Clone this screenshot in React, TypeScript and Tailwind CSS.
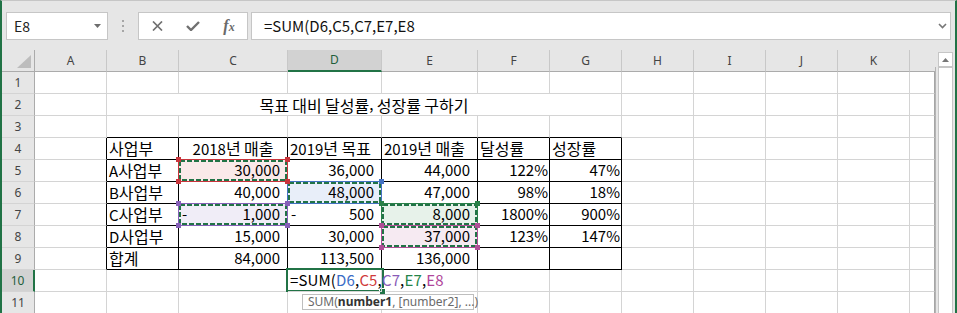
import React from "react";

type Kind = "l" | "c" | "n" | "p" | "d";
type Cell = { t: string; k: Kind; bg?: string };

const CELL_FONT = "font-['Noto_Sans_CJK_KR','Noto_Sans',sans-serif]";
const UI_FONT = "font-['Noto_Sans','Noto_Sans_CJK_KR',sans-serif]";

const COLS = ["", "A", "B", "C", "D", "E", "F", "G", "H", "I", "J", "K", ""];

const ALIGN: Record<Kind, string> = {
  l: "justify-start pl-[2px]",
  c: "justify-center",
  n: "justify-end pr-[7px]",
  p: "justify-end pr-[1px]",
  d: "justify-between pl-[3px] pr-[7px]",
};

// sheet contents, keyed by row then column index (1 = A)
const DATA: Record<number, Record<number, Cell>> = {
  4: {
    2: { t: "사업부", k: "l" },
    3: { t: "2018년 매출", k: "c" },
    4: { t: "2019년 목표", k: "l" },
    5: { t: "2019년 매출", k: "l" },
    6: { t: "달성률", k: "l" },
    7: { t: "성장률", k: "l" },
  },
  5: {
    2: { t: "A사업부", k: "l" },
    3: { t: "30,000", k: "n", bg: "bg-[#fae9e9]" },
    4: { t: "36,000", k: "n" },
    5: { t: "44,000", k: "n" },
    6: { t: "122%", k: "p" },
    7: { t: "47%", k: "p" },
  },
  6: {
    2: { t: "B사업부", k: "l" },
    3: { t: "40,000", k: "n" },
    4: { t: "48,000", k: "n", bg: "bg-[#e8eef9]" },
    5: { t: "47,000", k: "n" },
    6: { t: "98%", k: "p" },
    7: { t: "18%", k: "p" },
  },
  7: {
    2: { t: "C사업부", k: "l" },
    3: { t: "1,000", k: "d", bg: "bg-[#f0edf7]" },
    4: { t: "500", k: "d" },
    5: { t: "8,000", k: "n", bg: "bg-[#e7f2ea]" },
    6: { t: "1800%", k: "p" },
    7: { t: "900%", k: "p" },
  },
  8: {
    2: { t: "D사업부", k: "l" },
    3: { t: "15,000", k: "n" },
    4: { t: "30,000", k: "n" },
    5: { t: "37,000", k: "n", bg: "bg-[#f6eaf2]" },
    6: { t: "123%", k: "p" },
    7: { t: "147%", k: "p" },
  },
  9: {
    2: { t: "합계", k: "l" },
    3: { t: "84,000", k: "n" },
    4: { t: "113,500", k: "n" },
    5: { t: "136,000", k: "n" },
  },
};

// hangul runs are set a touch larger, like Malgun Gothic next to its digits
function Ko({ s }: { s: string }) {
  const parts = s.split(/([\uac00-\ud7a3]+)/);
  return (
    <>
      {parts.map((p, i) =>
        /[\uac00-\ud7a3]/.test(p) ? (
          <span key={i} className="text-[16px]">
            {p}
          </span>
        ) : (
          <span key={i} className="whitespace-pre">
            {p}
          </span>
        )
      )}
    </>
  );
}

function borders(r: number, c: number) {
  const rBlack = r >= 4 && r <= 9 && c >= 1 && c <= 7;
  const bBlack = r >= 3 && r <= 9 && c >= 2 && c <= 7;
  const right = c === 12 ? "border-r-[#a6a6a6]" : rBlack ? "border-r-black" : "border-r-[#d4d4d4]";
  const bottom = bBlack ? "border-b-black" : "border-b-[#d4d4d4]";
  return `border-r border-b ${right} ${bottom}`;
}

function RefBox({
  pos,
  line,
  dot,
  w,
  h,
}: {
  pos: string;
  line: string;
  dot: string;
  w: number;
  h: number;
}) {
  return (
    <div className={`absolute ${pos}`}>
      <div className={`absolute inset-0 border ${line}`} />
      <svg className="absolute left-[1px] top-[1px]" width={w - 2} height={h - 2}>
        <rect
          x={1}
          y={1}
          width={w - 4}
          height={h - 4}
          fill="none"
          stroke="#217346"
          strokeWidth={2}
          strokeDasharray="5 2"
        />
      </svg>
      <span className={`absolute left-[-2px] top-[-2px] size-[5px] ${dot}`} />
      <span className={`absolute right-[-2px] top-[-2px] size-[5px] ${dot}`} />
      <span className={`absolute left-[-2px] bottom-[-2px] size-[5px] ${dot}`} />
      <span className={`absolute right-[-2px] bottom-[-2px] size-[5px] ${dot}`} />
    </div>
  );
}

function FormulaBar() {
  return (
    <div className="h-[49px] flex items-start pt-[11px] pl-[4px] pr-[4px]">
      {/* Name box */}
      <div className="w-[102px] h-[28px] bg-white border border-[#c6c6c6] flex items-center justify-between pl-[7px] pr-[6px]">
        <span className={`text-[14px] text-[#222] ${CELL_FONT}`}>E8</span>
        <svg width="7" height="4">
          <path d="M0 0H7L3.5 4Z" fill="#6d6d6d" />
        </svg>
      </div>
      <div className="w-[30px] h-[28px] flex flex-col items-center justify-center gap-[3px]">
        <span className="size-[2px] bg-[#a6a6a6]" />
        <span className="size-[2px] bg-[#a6a6a6]" />
        <span className="size-[2px] bg-[#a6a6a6]" />
      </div>
      {/* Cancel / Enter / fx */}
      <div className="w-[110px] h-[28px] bg-white border border-[#c6c6c6] flex items-center">
        <div className="w-[36px] flex justify-center">
          <svg width="11" height="10">
            <path d="M1 0.5L10 9.5M10 0.5L1 9.5" stroke="#707070" strokeWidth="1.7" />
          </svg>
        </div>
        <div className="w-[36px] flex justify-center">
          <svg width="14" height="10">
            <path d="M1 5L5 9L13 1" stroke="#707070" strokeWidth="2.4" fill="none" />
          </svg>
        </div>
        <div className="w-[36px] flex justify-center">
          <span className="font-['Liberation_Serif',serif] italic font-bold text-[#6a6a6a] text-[16px] leading-none">
            f<span className="text-[12px]">x</span>
          </span>
        </div>
      </div>
      {/* Formula input */}
      <div className="flex-1 ml-[3px] h-[28px] bg-white border border-[#c6c6c6] flex items-center justify-between pl-[12px] pr-[3px]">
        <span className={`text-[15px] text-[#111] ${CELL_FONT}`}>=SUM(D6,C5,C7,E7,E8</span>
        <svg width="9" height="6">
          <path d="M1 1L4.5 4.5L8 1" stroke="#777" strokeWidth="1.6" fill="none" />
        </svg>
      </div>
    </div>
  );
}

function Sheet() {
  const cells: React.ReactNode[] = [];

  // column headers
  COLS.forEach((label, c) => {
    if (c === 0) {
      cells.push(
        <div key="corner" className="relative bg-[#e6e6e6] border-r border-b border-r-[#ababab] border-b-[#ababab]">
          <svg className="absolute left-[13px] top-[5px]" width="17" height="14">
            <path d="M16 0V13H2Z" fill="#bdbdbd" />
          </svg>
        </div>
      );
      return;
    }
    const sel = c === 4;
    cells.push(
      <div
        key={`h${c}`}
        className={`flex items-center justify-center text-[12px] ${UI_FONT} ${
          sel
            ? "bg-[#d2d2d2] border-b-2 border-b-[#217346] text-[#1e5e3b]"
            : "bg-[#e6e6e6] border-b border-b-[#ababab] text-[#444]"
        } ${c === 12 ? "" : "border-r border-r-[#c8c8c8]"}`}
      >
        {label}
      </div>
    );
  });

  for (let r = 1; r <= 11; r++) {
    const sel = r === 10;
    cells.push(
      <div
        key={`r${r}`}
        className={`flex items-center justify-center text-[12px] ${UI_FONT} border-b border-b-[#d4d4d4] ${
          sel
            ? "bg-[#d2d2d2] border-r-2 border-r-[#217346] text-[#1e5e3b]"
            : "bg-[#e6e6e6] border-r border-r-[#ababab] text-[#444]"
        }`}
      >
        {r}
      </div>
    );

    for (let c = 1; c <= 12; c++) {
      if (r === 2 && c >= 2 && c <= 7) {
        if (c === 2) {
          cells.push(
            <div
              key="title"
              className={`col-span-6 flex items-center justify-center text-[15px] text-black ${CELL_FONT} border-r border-b border-r-[#d4d4d4] border-b-[#d4d4d4]`}
            >
              <Ko s="목표 대비 달성률, 성장률 구하기" />
            </div>
          );
        }
        continue;
      }

      if (r === 10 && c === 4) {
        cells.push(
          <div
            key="d10"
            className={`relative z-10 flex items-center pl-[2px] whitespace-nowrap overflow-visible text-[15px] tracking-[0.15px] ${CELL_FONT} ${borders(r, c)}`}
          >
            <span className="text-black">=SUM(</span>
            <span className="text-[#3a6cc6]">D6</span>
            <span className="text-black">,</span>
            <span className="text-[#d03a3a]">C5</span>
            <span className="text-black">,</span>
            <span className="text-[#8a5cb8]">C7</span>
            <span className="text-black">,</span>
            <span className="text-[#24844a]">E7</span>
            <span className="text-black">,</span>
            <span className="text-[#b0459a]">E8</span>
          </div>
        );
        continue;
      }

      const cell = DATA[r]?.[c];
      cells.push(
        <div
          key={`${r}-${c}`}
          className={`flex items-center whitespace-nowrap text-[15px] text-black ${CELL_FONT} ${borders(r, c)} ${
            cell ? ALIGN[cell.k] : ""
          } ${cell?.bg ?? ""}`}
        >
          {cell && cell.k === "d" ? (
            <>
              <span>-</span>
              <span>{cell.t}</span>
            </>
          ) : cell ? (
            <span>
              <Ko s={cell.t} />
            </span>
          ) : null}
        </div>
      );
    }
  }

  return (
    <div className="relative grid grid-cols-[33px_72px_72px_109px_94px_96px_72px_72px_72px_72px_72px_72px_25px] auto-rows-[22px] content-start bg-white">
      {cells}

      {/* formula references */}
      <RefBox pos="left-[285px] top-[131px] w-[95px] h-[23px]" line="border-[#4472c4]" dot="bg-[#4472c4]" w={95} h={23} />
      <RefBox pos="left-[176px] top-[109px] w-[110px] h-[23px]" line="border-[#c8353c]" dot="bg-[#c8353c]" w={110} h={23} />
      <RefBox pos="left-[176px] top-[153px] w-[110px] h-[23px]" line="border-[#8660b8]" dot="bg-[#8660b8]" w={110} h={23} />
      <RefBox pos="left-[379px] top-[153px] w-[97px] h-[23px]" line="border-[#2a8048]" dot="bg-[#2a8048]" w={97} h={23} />
      <RefBox pos="left-[379px] top-[175px] w-[97px] h-[23px]" line="border-[#b04f97]" dot="bg-[#b04f97]" w={97} h={23} />

      {/* active cell */}
      <div className="absolute left-[284px] top-[218px] w-[98px] h-[24px] border-2 border-[#217346]" />
      <div className="absolute left-[377px] top-[238px] size-[7px] bg-[#217346] border border-white" />

      {/* function tooltip */}
      <div className="absolute z-20 left-[300px] top-[244px] w-[172px] h-[16px] bg-white border border-[#bebebe] flex items-center pl-[5px] text-[12px] leading-[14px] text-[#6a6a6a] font-['Noto_Sans',sans-serif] whitespace-nowrap">
        SUM(<span className="font-bold text-[#333]">number1</span>, [number2], ...)
      </div>
    </div>
  );
}

function ScrollBar() {
  return (
    <div className="w-[20px] flex flex-col">
      <div className="h-[17px] pl-[3px] pt-[2px]">
        <div className="w-[15px] h-[15px] bg-white border border-[#c6c6c6] flex items-center justify-center">
          <svg width="7" height="4">
            <path d="M0 4H7L3.5 0Z" fill="#777" />
          </svg>
        </div>
      </div>
      <div className="flex-1 border-l border-l-[#b4b4b4] pl-[2px]">
        <div className="w-[15px] h-[260px] bg-white border border-[#c6c6c6]" />
      </div>
    </div>
  );
}

export default function App() {
  return (
    <div className="w-[957px] h-[313px] overflow-hidden bg-[#e6e6e6] border-t border-t-[#c6c6c6] border-l-2 border-l-[#217346] border-r-2 border-r-[#217346] flex flex-col">
      <FormulaBar />
      <div className="flex-1 flex min-h-0">
        <Sheet />
        <ScrollBar />
      </div>
    </div>
  );
}
